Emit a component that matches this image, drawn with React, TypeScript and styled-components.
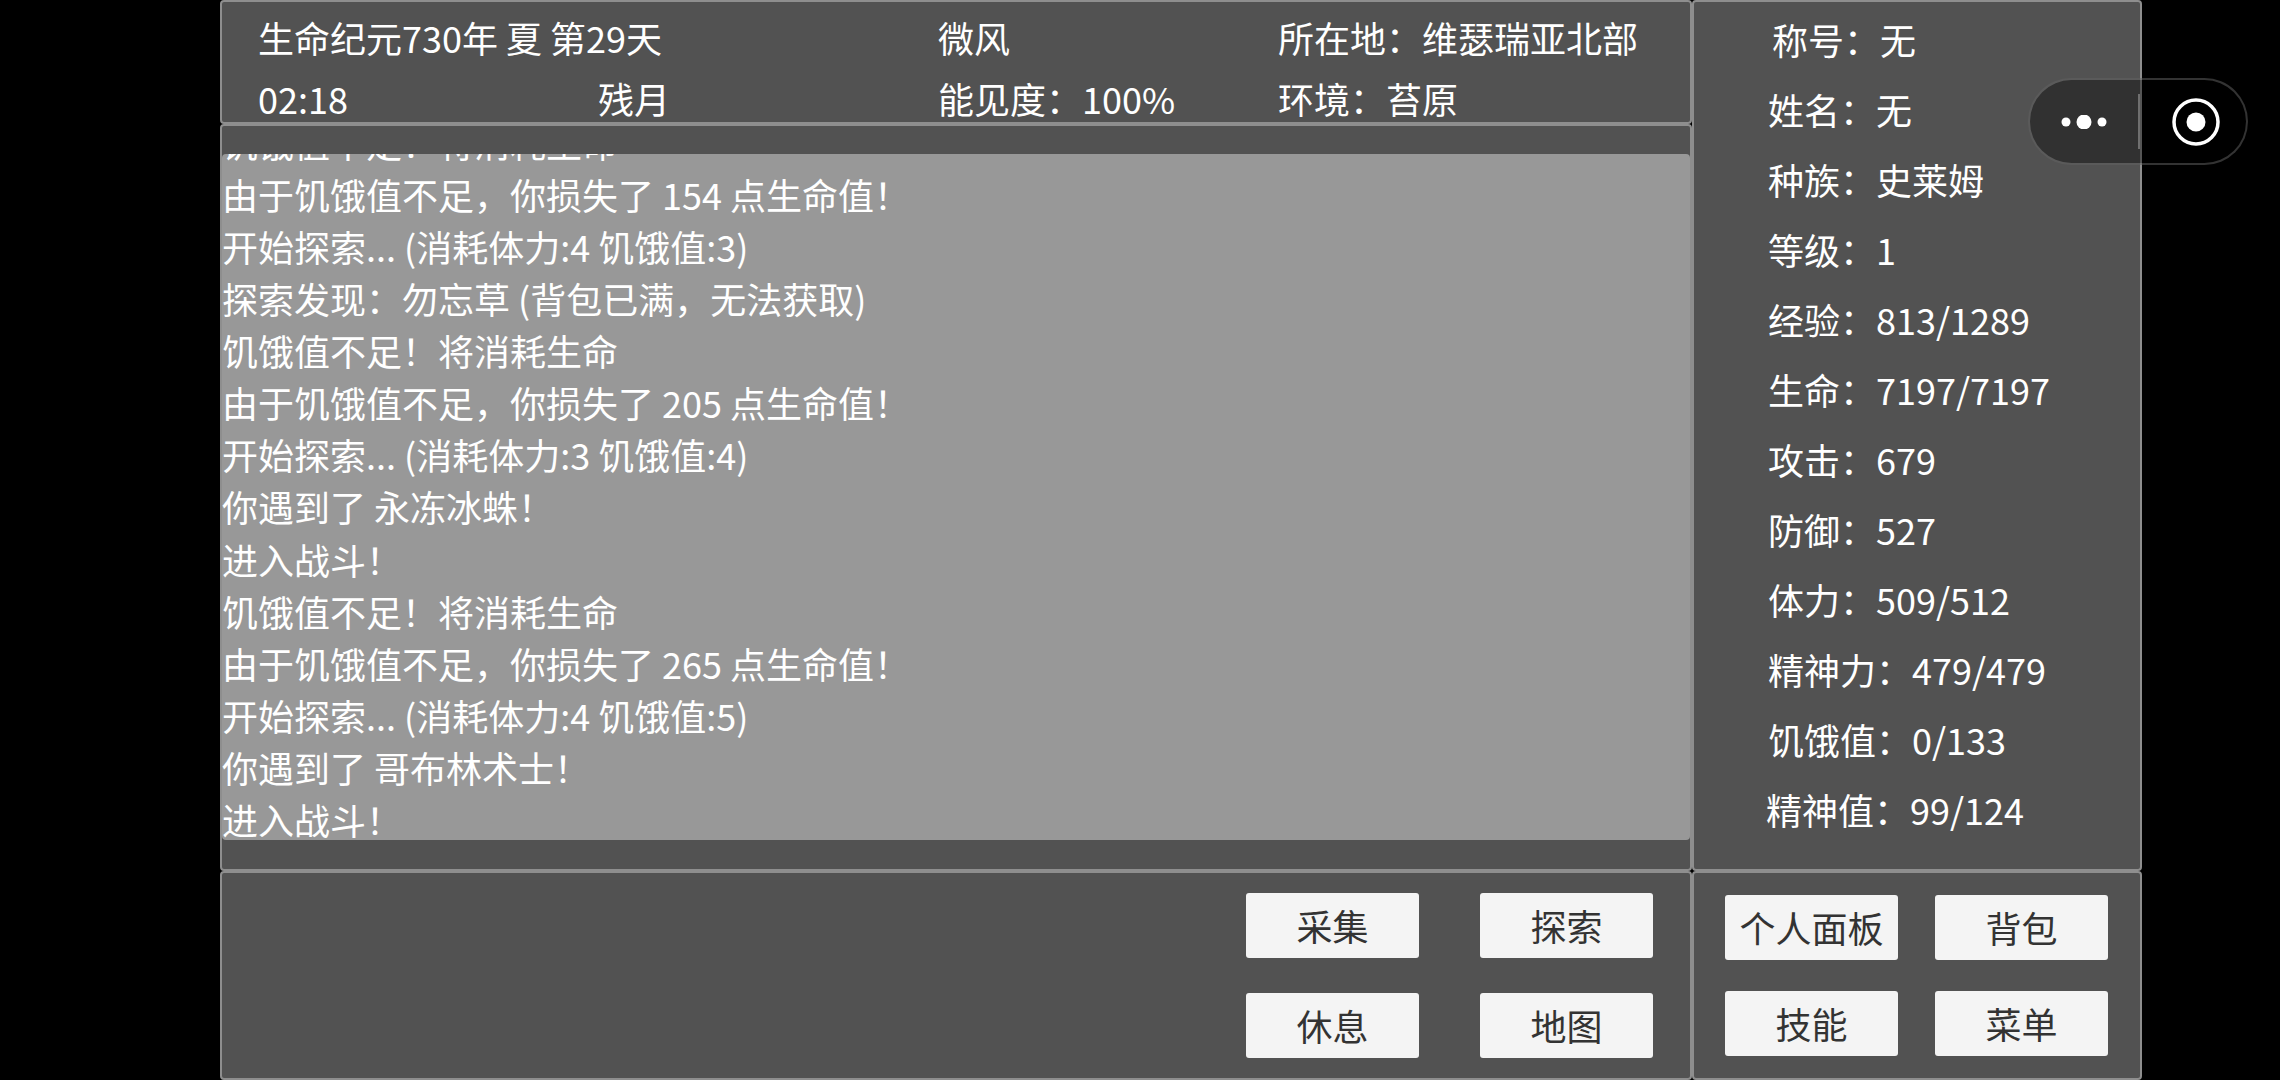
import { FC } from 'react';
import styled, { createGlobalStyle, css } from 'styled-components';

const GlobalStyle = createGlobalStyle`
  html, body {
    margin: 0;
    padding: 0;
    background: #000;
  }
  body {
    width: 2280px;
    height: 1080px;
    overflow: hidden;
    font-family: "Noto Sans CJK SC", "Noto Sans", sans-serif;
  }
`;

const logLines = [
  '饥饿值不足！将消耗生命',
  '由于饥饿值不足，你损失了 154 点生命值！',
  '开始探索... (消耗体力:4 饥饿值:3)',
  '探索发现：勿忘草 (背包已满，无法获取)',
  '饥饿值不足！将消耗生命',
  '由于饥饿值不足，你损失了 205 点生命值！',
  '开始探索... (消耗体力:3 饥饿值:4)',
  '你遇到了 永冻冰蛛！',
  '进入战斗！',
  '饥饿值不足！将消耗生命',
  '由于饥饿值不足，你损失了 265 点生命值！',
  '开始探索... (消耗体力:4 饥饿值:5)',
  '你遇到了 哥布林术士！',
  '进入战斗！',
];

const stats = [
  { text: '称号：无', indent: 4 },
  { text: '姓名：无', indent: 0 },
  { text: '种族：史莱姆', indent: 0 },
  { text: '等级：1', indent: 0 },
  { text: '经验：813/1289', indent: 0 },
  { text: '生命：7197/7197', indent: 0 },
  { text: '攻击：679', indent: 0 },
  { text: '防御：527', indent: 0 },
  { text: '体力：509/512', indent: 0 },
  { text: '精神力：479/479', indent: 0 },
  { text: '饥饿值：0/133', indent: 0 },
  { text: '精神值：99/124', indent: -2 },
];

export default function App() {
  return (
    <>
      <GlobalStyle />
      <Screen>
        <MainColumn>
          <InfoPanel>
            <InfoText>生命纪元730年 夏 第29天</InfoText>
            <InfoText />
            <InfoText>微风</InfoText>
            <InfoText>所在地：维瑟瑞亚北部</InfoText>
            <InfoText>02:18</InfoText>
            <InfoText>残月</InfoText>
            <InfoText>能见度：100%</InfoText>
            <InfoText>环境：苔原</InfoText>
          </InfoPanel>
          <LogPanel>
            <LogBox>
              <LogList>
                {logLines.map((line, i) => (
                  <LogLine key={i}>{line}</LogLine>
                ))}
              </LogList>
            </LogBox>
          </LogPanel>
          <ActionPanel>
            <ActionGrid>
              <ActionButton label="采集" />
              <ActionButton label="探索" />
              <ActionButton label="休息" />
              <ActionButton label="地图" />
            </ActionGrid>
          </ActionPanel>
        </MainColumn>
        <SideColumn>
          <StatsPanel>
            {stats.map((s) => (
              <StatRow key={s.text} $indent={s.indent}>
                {s.text}
              </StatRow>
            ))}
          </StatsPanel>
          <MenuPanel>
            <MenuGrid>
              <ActionButton label="个人面板" />
              <ActionButton label="背包" />
              <ActionButton label="技能" />
              <ActionButton label="菜单" />
            </MenuGrid>
          </MenuPanel>
        </SideColumn>
        <CapsuleMenu>
          <Dots viewBox="0 0 46 14">
            <circle cx="5" cy="7" r="4.5" />
            <circle cx="23" cy="7" r="7.5" />
            <circle cx="41" cy="7" r="4.5" />
          </Dots>
          <CapsuleDivider />
          <Target viewBox="0 0 48 48">
            <circle cx="24" cy="24" r="22" fill="none" stroke="#fff" strokeWidth="3.5" />
            <circle cx="24" cy="24" r="9.5" fill="#fff" />
          </Target>
        </CapsuleMenu>
      </Screen>
    </>
  );
}

const ActionButton: FC<{ label: string }> = ({ label }) => <StButton>{label}</StButton>;

const Screen = styled.div`
  position: relative;
  display: flex;
  width: 1922px;
  height: 1080px;
  margin-left: 220px;
  background: #000;
  color: #fff;
`;

const panel = css`
  box-sizing: border-box;
  background: #525252;
  border: 2px solid #8e8e8e;
  border-radius: 4px;
`;

const MainColumn = styled.div`
  display: flex;
  flex-direction: column;
  width: 1472px;
  height: 100%;
`;

const SideColumn = styled.div`
  display: flex;
  flex-direction: column;
  width: 450px;
  height: 100%;
`;

const InfoPanel = styled.div`
  ${panel}
  display: grid;
  grid-template-columns: 340px 340px 340px 1fr;
  grid-template-rows: 62px 60px;
  align-items: center;
  height: 124px;
  padding: 4px 0 0 36px;
  overflow: hidden;
`;

const InfoText = styled.div`
  font-size: 36px;
  line-height: 44px;
  white-space: nowrap;
`;

const LogPanel = styled.div`
  ${panel}
  flex: 1;
  min-height: 0;
  padding: 28px 0 29px;
`;

const LogBox = styled.div`
  display: flex;
  flex-direction: column;
  justify-content: flex-end;
  height: 100%;
  overflow: hidden;
  background: #989898;
  border-radius: 4px;
`;

const LogList = styled.div`
  display: flex;
  flex-direction: column;
  gap: 12.1px;
  margin-bottom: 1px;
`;

const LogLine = styled.div`
  font-size: 36px;
  line-height: 40px;
  white-space: nowrap;
`;

const ActionPanel = styled.div`
  ${panel}
  display: flex;
  justify-content: flex-end;
  height: 209px;
  padding: 20px 37px 0 0;
`;

const ActionGrid = styled.div`
  display: grid;
  grid-template-columns: 173px 173px;
  grid-auto-rows: 65px;
  column-gap: 61px;
  row-gap: 35px;
`;

const StatsPanel = styled.div`
  ${panel}
  display: flex;
  flex: 1;
  flex-direction: column;
  min-height: 0;
  padding: 2px 0 0 74px;
`;

const StatRow = styled.div<{ $indent: number }>`
  height: 70px;
  margin-left: ${({ $indent }) => $indent}px;
  font-size: 36px;
  line-height: 70px;
  white-space: nowrap;
`;

const MenuPanel = styled.div`
  ${panel}
  height: 209px;
  padding: 22px 0 0 31px;
`;

const MenuGrid = styled.div`
  display: grid;
  grid-template-columns: 173px 173px;
  grid-auto-rows: 65px;
  column-gap: 37px;
  row-gap: 31px;
`;

const StButton = styled.div`
  display: flex;
  align-items: center;
  justify-content: center;
  background: #f4f4f4;
  border-radius: 3px;
  color: #333;
  font-size: 36px;
  line-height: 65px;
  white-space: nowrap;
`;

const CapsuleMenu = styled.div`
  position: absolute;
  top: 78px;
  left: 1808px;
  display: flex;
  align-items: center;
  box-sizing: border-box;
  width: 220px;
  height: 87px;
  padding-left: 31px;
  background: rgba(0, 0, 0, 0.4);
  border: 2px solid rgba(255, 255, 255, 0.2);
  border-radius: 44px;
`;

const Dots = styled.svg`
  width: 46px;
  height: 14px;
  fill: #fff;
`;

const CapsuleDivider = styled.div`
  width: 2px;
  height: 55px;
  margin-left: 31px;
  background: rgba(255, 255, 255, 0.3);
`;

const Target = styled.svg`
  width: 48px;
  height: 48px;
  margin-left: 32px;
`;
